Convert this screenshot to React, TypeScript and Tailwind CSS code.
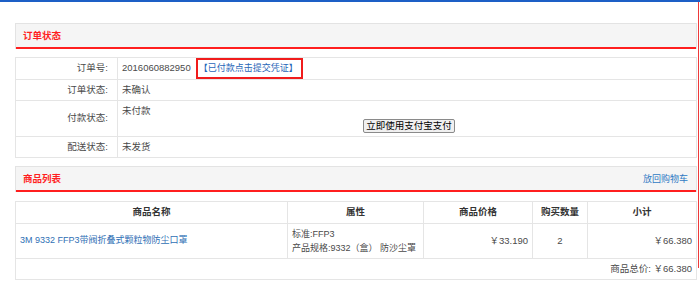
import React from "react";

const font = { fontFamily: '"Liberation Sans", "Noto Sans CJK SC", sans-serif' };

function SectionHeader({ title, action }: { title: string; action?: string }) {
  return (
    <div className="flex h-[26px] items-center justify-between border border-b-0 border-[#e3e3e3] bg-[#f5f5f5] pl-[7px] pr-[8px] shadow-[inset_0_-2px_0_#ff1f1f]">
      <span className="text-[9.5px] font-bold text-[#ff1f1f]">{title}</span>
      {action && <a className="cursor-pointer text-[9px] text-[#2f7ac4]">{action}</a>}
    </div>
  );
}

const cell = "border border-[#e5e5e5]";

export default function App() {
  return (
    <div className="relative h-[285px] w-[700px] overflow-hidden bg-white text-[9.5px] text-[#4a4a4a]" style={font}>
      <div className="h-[2px] bg-[#1d5fc6]" />
      <div className="absolute right-[1px] top-[2px] h-[266px] w-[1px] bg-[#ee3a3a]" />

      <div className="ml-[15px] mr-[3px] pt-[21px]">
        <SectionHeader title="订单状态" />

        <table className="mt-[8px] w-full border-collapse">
          <tbody>
            <tr className="h-[22px]">
              <td className={`w-[102px] ${cell} pr-[9px] text-right`}>订单号:</td>
              <td className={`${cell} pl-[4px] align-middle`}>
                <span>2016060882950</span>
                <a className="ml-[5px] inline-block h-[21px] whitespace-nowrap border-2 border-[#f01c1c] pl-[1px] pr-[3px] align-middle text-[9px] leading-[17px] text-[#1f66b8]">
                  【已付款点击提交凭证】
                </a>
              </td>
            </tr>
            <tr className="h-[21px]">
              <td className={`${cell} pr-[9px] text-right`}>订单状态:</td>
              <td className={`${cell} pl-[4px]`}>未确认</td>
            </tr>
            <tr className="h-[36px]">
              <td className={`${cell} pr-[9px] text-right`}>付款状态:</td>
              <td className={`${cell} pl-[4px] align-top`}>
                <div className="pt-[2px] leading-[16px]">未付款</div>
                <div className="flex justify-center">
                  <button className="h-[14px] rounded-[2px] border border-[#8a8a8a] bg-[#f0f0f0] px-[2px] text-[9.5px] leading-[12px] text-black">
                    立即使用支付宝支付
                  </button>
                </div>
              </td>
            </tr>
            <tr className="h-[21px]">
              <td className={`${cell} pr-[9px] text-right`}>配送状态:</td>
              <td className={`${cell} pl-[4px]`}>未发货</td>
            </tr>
          </tbody>
        </table>

        <div className="mt-[8px]">
          <SectionHeader title="商品列表" action="放回购物车" />
        </div>

        <table className="mt-[9px] w-full border-collapse">
          <thead>
            <tr className="h-[22px] text-[9.5px] font-bold text-[#333]">
              <th className={`w-[272px] ${cell}`}>商品名称</th>
              <th className={`w-[136px] ${cell}`}>属性</th>
              <th className={`w-[109px] ${cell}`}>商品价格</th>
              <th className={`w-[55px] ${cell}`}>购买数量</th>
              <th className={cell}>小计</th>
            </tr>
          </thead>
          <tbody>
            <tr className="h-[35px]">
              <td className={`${cell} pl-[4px] text-[9px]`}>
                <a className="text-[#2f6fb5]">3M 9332 FFP3带阀折叠式颗粒物防尘口罩</a>
              </td>
              <td className={`whitespace-nowrap ${cell} pl-[4px] text-[9px] leading-[14px]`}>
                <div>标准:FFP3</div>
                <div>产品规格:9332（盒） 防沙尘罩</div>
              </td>
              <td className={`${cell} pr-[4px] text-right`}>￥33.190</td>
              <td className={`${cell} text-center`}>2</td>
              <td className={`${cell} pr-[4px] text-right`}>￥66.380</td>
            </tr>
            <tr className="h-[21px]">
              <td colSpan={5} className={`${cell} pr-[4px] text-right`}>
                商品总价: ￥66.380
              </td>
            </tr>
          </tbody>
        </table>
      </div>
    </div>
  );
}
